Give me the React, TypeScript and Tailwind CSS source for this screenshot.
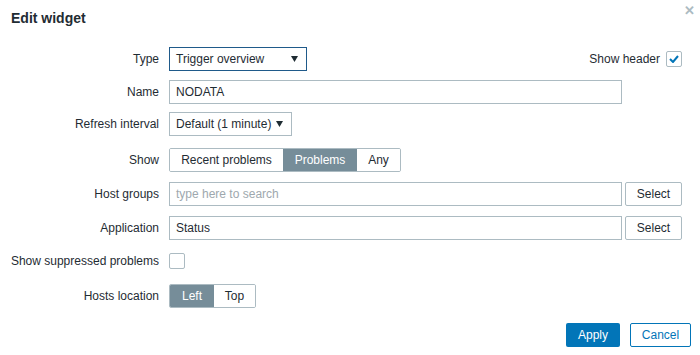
import React from "react";

const font = { fontFamily: '"Liberation Sans", Arial, sans-serif' };

const Arrow = () => (
  <svg width="7" height="6" viewBox="0 0 7 6" className="ml-auto">
    <polygon points="0,0 7,0 3.5,6" fill="#1f2c33" />
  </svg>
);

const Check = () => (
  <svg width="10" height="8" viewBox="0 0 10 8">
    <path d="M1 4 L4 7 L9 1" stroke="#0275b8" strokeWidth="2" fill="none" />
  </svg>
);

function Row({ label, mt, children }: { label: string; mt: string; children: React.ReactNode }) {
  return (
    <div className={`flex items-center h-[24px] ${mt}`}>
      <div className="w-[159px] shrink-0 text-right pr-[10px] box-content whitespace-nowrap">{label}</div>
      <div className="w-[10px] shrink-0" />
      {children}
    </div>
  );
}

function Segments({ items, active, widths }: { items: string[]; active: number; widths: string[] }) {
  return (
    <div className="flex h-[24px] border border-[#acbbc2] rounded-[2px] overflow-hidden">
      {items.map((it, i) => (
        <div
          key={it}
          className={`${widths[i]} flex items-center justify-center ${
            i === active ? "bg-[#768d99] text-white" : "bg-white"
          }`}
        >
          {it}
        </div>
      ))}
    </div>
  );
}

export default function App() {
  return (
    <div className="relative w-[700px] h-[355px] bg-white text-[12px] text-[#1f2c33]" style={font}>
      <div className="absolute top-[4px] right-[5px] text-[#acbbc2] text-[13px] leading-none font-bold">✕</div>
      <div className="pt-[10px] pl-[11px] text-[14px] leading-4 font-bold text-[#1f2c33]">Edit widget</div>

      <div className="mt-[21px]">
        <div className="flex items-center h-[24px] -mt-[0px]">
          <div className="w-[159px] shrink-0 text-right">Type</div>
          <div className="w-[10px] shrink-0" />
          <div className="w-[138px] h-[24px] border border-[#1f5a8a] flex items-center px-[6px] pr-[8px]">
            Trigger overview
            <Arrow />
          </div>
          <div className="ml-auto flex items-center mr-[18px]">
            <span className="mr-[6px]">Show header</span>
            <div className="w-[16px] h-[16px] border border-[#acbbc2] rounded-[2px] flex items-center justify-center">
              <Check />
            </div>
          </div>
        </div>

        <div className="flex items-center h-[24px] mt-[9px]">
          <div className="w-[159px] shrink-0 text-right">Name</div>
          <div className="w-[10px] shrink-0" />
          <div className="w-[453px] h-[24px] border border-[#acbbc2] flex items-center px-[6px]">NODATA</div>
        </div>

        <div className="flex items-center h-[24px] mt-[8px]">
          <div className="w-[159px] shrink-0 text-right">Refresh interval</div>
          <div className="w-[10px] shrink-0" />
          <div className="w-[123px] h-[24px] border border-[#acbbc2] flex items-center px-[6px] pr-[8px]">
            Default (1 minute)
            <Arrow />
          </div>
        </div>

        <div className="flex items-center h-[24px] mt-[12px]">
          <div className="w-[159px] shrink-0 text-right">Show</div>
          <div className="w-[10px] shrink-0" />
          <Segments
            items={["Recent problems", "Problems", "Any"]}
            active={1}
            widths={["w-[113px]", "w-[74px]", "w-[43px]"]}
          />
        </div>

        <div className="flex items-center h-[24px] mt-[10px]">
          <div className="w-[159px] shrink-0 text-right">Host groups</div>
          <div className="w-[10px] shrink-0" />
          <div className="w-[453px] h-[24px] border border-[#acbbc2] flex items-center px-[6px] text-[#9ea8ae]">
            type here to search
          </div>
          <div className="ml-[3px] w-[57px] h-[24px] border border-[#acbbc2] rounded-[2px] flex items-center justify-center">
            Select
          </div>
        </div>

        <div className="flex items-center h-[24px] mt-[10px]">
          <div className="w-[159px] shrink-0 text-right">Application</div>
          <div className="w-[10px] shrink-0" />
          <div className="w-[453px] h-[24px] border border-[#acbbc2] flex items-center px-[6px]">Status</div>
          <div className="ml-[3px] w-[57px] h-[24px] border border-[#acbbc2] rounded-[2px] flex items-center justify-center">
            Select
          </div>
        </div>

        <div className="flex items-center h-[24px] mt-[9px]">
          <div className="w-[159px] shrink-0 text-right">Show suppressed problems</div>
          <div className="w-[10px] shrink-0" />
          <div className="w-[16px] h-[16px] border border-[#acbbc2] rounded-[2px]" />
        </div>

        <div className="flex items-center h-[24px] mt-[11px]">
          <div className="w-[159px] shrink-0 text-right">Hosts location</div>
          <div className="w-[10px] shrink-0" />
          <Segments items={["Left", "Top"]} active={0} widths={["w-[44px]", "w-[41px]"]} />
        </div>

        <div className="flex justify-end items-center mt-[15px] pr-[9px] gap-[10px]">
          <div className="w-[54px] h-[24px] bg-[#0275b8] text-white rounded-[2px] flex items-center justify-center">
            Apply
          </div>
          <div className="w-[61px] h-[24px] border border-[#0275b8] text-[#0275b8] rounded-[2px] flex items-center justify-center">
            Cancel
          </div>
        </div>
      </div>
    </div>
  );
}
